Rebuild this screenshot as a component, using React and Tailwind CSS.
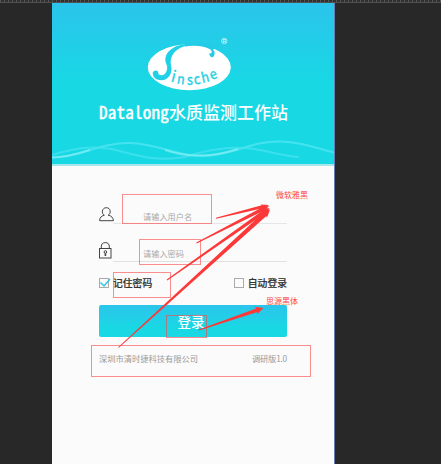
const ARROWS = [
  { from: [216, 218.3], to: [269, 205], w: 1.6, head: 2.6 },
  { from: [196.5, 243], to: [269, 206], w: 1.9, head: 3.2 },
  { from: [167, 280], to: [269.5, 208], w: 1.9, head: 3.8 },
  { from: [118.5, 347.5], to: [270, 209.5], w: 2.3, head: 4.2 },
  { from: [199, 330], to: [263.5, 308], w: 1.9, head: 4 },
];

function Arrow({ from, to, w, head }) {
  const dx = to[0] - from[0];
  const dy = to[1] - from[1];
  const len = Math.hypot(dx, dy);
  const at = (d, o) => `${from[0] + (dx / len) * d - (dy / len) * o},${from[1] + (dy / len) * d + (dx / len) * o}`;
  const points = [at(0, 0.5), at(len - 7, w), at(len - 8, head), at(len, 0), at(len - 8, -head), at(len - 7, -w), at(0, -0.5)];
  return <polygon points={points.join(" ")} fill="#fd3838" />;
}

function Annotations() {
  return (
    <svg className="absolute left-0 top-0 pointer-events-none" width="441" height="464" viewBox="0 0 441 464">
      <g fill="none" stroke="#fa4646" strokeOpacity="0.6">
        <rect x="122.5" y="194.5" width="89" height="29" />
        <rect x="139.5" y="239.5" width="61" height="25" />
        <rect x="113.5" y="272.5" width="57" height="25" />
        <rect x="166.5" y="315.5" width="40" height="22" />
        <rect x="91.5" y="345.5" width="219" height="31" />
      </g>
      {ARROWS.map((a, i) => (
        <Arrow key={i} {...a} />
      ))}
      <g className="text-[8px] font-['Noto_Sans_CJK_SC',sans-serif]" fill="#fa4646">
        <text x="276" y="198">微软雅黑</text>
        <text x="266" y="304">思源黑体</text>
      </g>
    </svg>
  );
}

function Logo() {
  return (
    <svg width="90" height="60" viewBox="145 34 90 60" className="block">
      <ellipse cx="189.3" cy="67.2" rx="41.5" ry="23" fill="#fff" />
      <path
        d="M187.500 44 C181 44.500 176 46 173 48 C168 51 165.300 55 165.300 60 C165.300 63 167.500 65 167.200 68 C167 71 165.500 75 162 75.200 C159 75.400 158 74 158 71.500 C156.500 69.800 153 70.500 152.700 73 C153 78 157 80.300 161.500 80.200 C168 80 171.500 74.500 171.500 69 C171.500 66 170.300 64 170.700 61 C171.500 54 177 47.500 187.500 45.800Z"
        fill="#1fd0e7"
      />
      <path
        d="M185 43 L205 43 L216 48 L213 49.500 C215 51.500 215.200 54 213.800 56.200 C212.800 58 210.800 57.500 209.500 55 C209 53.700 209.500 53.200 210.500 53.400 C212.500 53 212.200 50.500 209.500 49 C203 45.500 193 45 185 46.500Z"
        fill="#22cce8"
      />
      <g fill="#1bcfe3" stroke="#1bcfe3" strokeWidth="0.35" className="text-[14px] font-['Noto_Sans_CJK_SC',sans-serif]">
        <text transform="translate(170.500 81.500) rotate(14) scale(1 1.150)">i</text>
        <text transform="translate(176.500 83.500) rotate(8) scale(0.9 1)">n</text>
        <text transform="translate(187 85) scale(0.9 1)">s</text>
        <text transform="translate(194.500 84.500) rotate(-8) scale(0.9 1)">c</text>
        <text transform="translate(202.500 83) rotate(-13) scale(0.9 1)">h</text>
        <text transform="translate(211.500 80) rotate(-20) scale(0.9 1)">e</text>
      </g>
      <circle cx="224.200" cy="41" r="2.800" fill="none" stroke="#c9f3fa" strokeWidth="0.7" />
      <text x="222.400" y="43" fill="#fff" className="text-[5px] font-['Liberation_Sans',sans-serif]">R</text>
    </svg>
  );
}

function Waves() {
  return (
    <svg width="282" height="28" viewBox="52 136 282 28" className="block" fill="none" strokeWidth="2">
      <path d="M52 156 C72 150 90 146 112 150 C135 156 155 163 185 158 C210 150 235 146 260 151 C275 154 285 157 299 158" stroke="#3ce0ed" />
      <path d="M52 158.500 C80 158 100 143.500 130 144 C160 145 175 157 203 157 C235 156 250 142 280 142.500 C302 142.500 318 150 334 153.500" stroke="#45e3ef" />
      <path d="M52 158.500 C65 158.500 78 155 90 151 M165 151 C185 158 210 159 238 150" stroke="#8aeff4" strokeOpacity="0.65" />
    </svg>
  );
}

function UserIcon() {
  return (
    <svg width="16" height="15" viewBox="0 0 16 15" fill="none" stroke="#444" strokeWidth="1">
      <path d="M5 8.200 C2.300 6.600 2.800 0.700 7.300 0.700 C12 0.700 12.300 6.500 9.200 8.200 C12.300 8.700 14.300 10.700 14.400 13.700 H0.600 C0.600 10.500 2.500 8.800 5.600 8.200" />
    </svg>
  );
}

function LockIcon() {
  return (
    <svg width="13" height="17" viewBox="0 0 13 17" fill="none" stroke="#444" strokeWidth="1">
      <rect x="0.500" y="6.500" width="11.500" height="9.500" />
      <path d="M2.300 6.500 V4.800 A4 4.200 0 0 1 10.300 4.800 V6.500" />
      <circle cx="6.400" cy="10" r="1.300" />
      <path d="M6.400 11.300 V14" strokeWidth="1.600" />
    </svg>
  );
}

function Check({ checked, label }) {
  return (
    <div className="flex items-center h-[12px]">
      <svg width="14" height="12" viewBox="0 0 14 12" fill="none">
        <rect x="0.500" y="1.500" width="9" height="9" stroke="#aaa" />
        {checked && <path d="M1.500 5.500 L5 9 L11 2" stroke="#31c5de" strokeWidth="1.500" />}
      </svg>
      <span className="text-[9.8px] leading-[12px] font-medium text-[#333] [-webkit-text-stroke:0.2px_#333]">{label}</span>
    </div>
  );
}

export default function App() {
  return (
    <div className="relative w-[441px] h-[464px] overflow-hidden bg-[#282828] flex flex-col font-['Noto_Sans_CJK_SC',sans-serif]">
      <div className="h-[2px] shrink-0 bg-[repeating-linear-gradient(90deg,#555_0px,#555_1px,#303030_1px,#303030_4px)]" />
      <div className="h-px shrink-0 bg-[#505050]" />
      <main className="ml-[52px] w-[283px] flex-1 bg-[#fbfbfb] border-r border-[#6680b4]">
        <header className="h-[161px] flex flex-col items-center bg-[linear-gradient(#2bc4eb_0%,#18d8e4_50%,#18d8e4_100%)]">
          <div className="mt-[31px] ml-[-6px]">
            <Logo />
          </div>
          <h1 className="mt-[5px] h-[25px] w-[190px] flex items-center whitespace-nowrap text-[17px] font-medium text-white leading-[25px] ml-[2px]">
            <span className="w-[70px] tracking-[0.25px] [-webkit-text-stroke:0.5px_white] font-['Noto_Sans_Mono_CJK_SC','Noto_Sans_CJK_SC',monospace]">Datalong</span>
            <span>水质监测工作站</span>
          </h1>
          <div className="mt-[11px]">
            <Waves />
          </div>
        </header>
        <div className="h-[2px] bg-[#a9e6ec]" />
        <form className="ml-[47px] w-[188px]">
          <div className="pt-[41px] h-[57px] flex items-start">
            <UserIcon />
            <span className="ml-[28px] mt-[3px] text-[8.2px] leading-[12px] text-[#aaa]">请输入用户名</span>
          </div>
          <div className="ml-[14px] h-px bg-[#e5e7e7]" />
          <div className="pt-[18px] h-[37px] flex items-start">
            <LockIcon />
            <span className="ml-[31px] mt-[5px] text-[8.2px] leading-[12px] text-[#aaa]">请输入密码</span>
          </div>
          <div className="ml-[14px] h-px bg-[#e0e2e2]" />
          <div className="mt-[15px] flex justify-between">
            <Check checked label="记住密码" />
            <Check label="自动登录" />
          </div>
          <button type="button" className="mt-[16px] block w-full h-[32px] rounded-[2px] bg-linear-to-b from-[#2bc4eb] to-[#18d8e4] to-70% text-[13.500px] font-medium leading-[32px] text-white pr-[4px]">
            登录
          </button>
          <footer className="mt-[15px] flex justify-between text-[8.25px] leading-[12px] text-[#999] whitespace-nowrap">
            <span>深圳市清时捷科技有限公司</span>
            <span className="tracking-[-0.2px]">调研版1.0</span>
          </footer>
        </form>
      </main>
      <Annotations />
    </div>
  );
}
